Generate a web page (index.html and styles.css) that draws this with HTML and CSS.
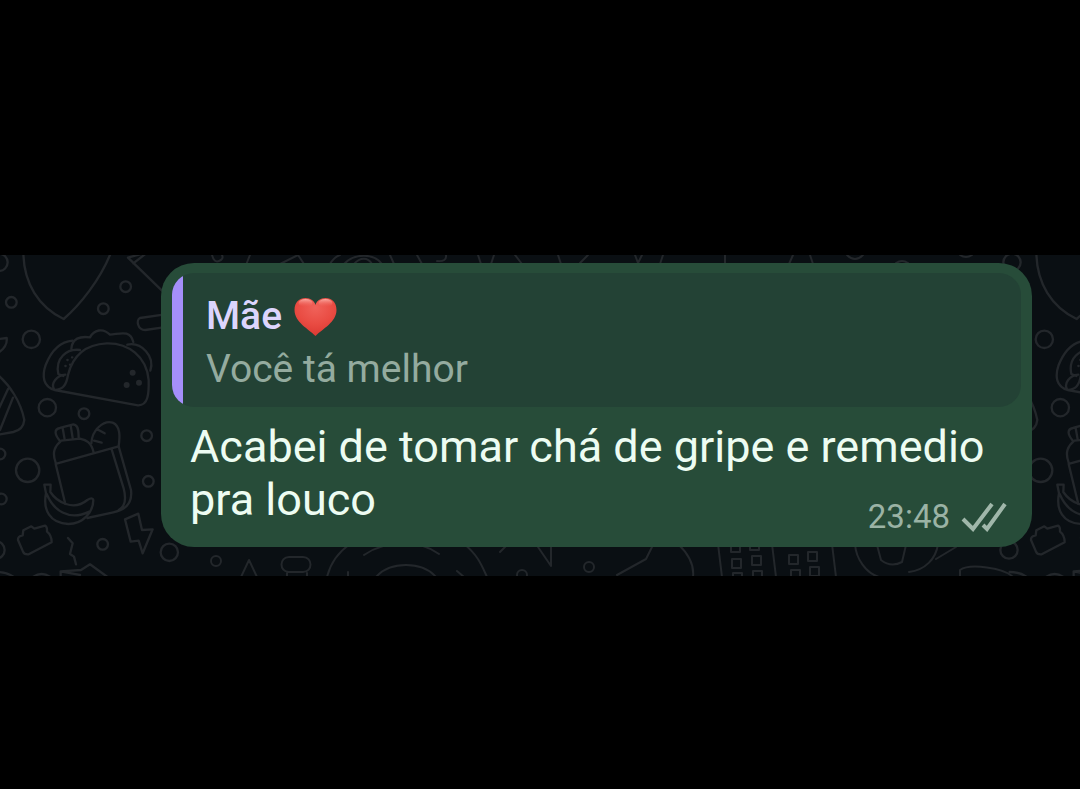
FILE: index.html
```html
<!DOCTYPE html>
<html lang="pt-BR">
<head>
    <meta charset="UTF-8">
    <meta name="viewport" content="width=device-width, initial-scale=1.0">
    <title>Mãe</title>
    <link rel="stylesheet" href="styles.css">
</head>
<body>
    <main class="chat">
        <svg class="wallpaper" aria-hidden="true">
            <defs>
                <g id="doodles">
                    <!-- upper half -->
                    <g transform="translate(0 -5) scale(.3333)">
                        <circle cx="-3" cy="37" r="26"/>
                        <circle cx="34" cy="157" r="16"/>
                        <circle cx="377" cy="110" r="16"/>
                        <circle cx="310" cy="176" r="16"/>
                        <circle cx="94" cy="268" r="26"/>
                        <circle cx="142" cy="473" r="26"/>
                        <circle cx="252" cy="491" r="16"/>
                        <path d="M70 10C72 100 115 170 191 207C240 165 300 90 332 10"/>
                        <path d="M430 10L384 23L486 122M400 40L436 12"/>
                        <path d="M490 194L420 204C408 210 412 240 436 240L490 232"/>
                        <path d="M-10 268L20 264C22 280 14 296 -5 308"/>
                        <path d="M-10 372C30 405 62 455 73 510Q70 540 40 546L0 553M24 417L-10 490M39 443L0 540"/>
                        <!-- taco -->
                        <path d="M164 420L414 466C445 467 447 430 446 390C440 320 385 278 320 280C245 284 215 330 204 375C199 405 190 418 164 420C130 410 125 380 137 345C155 300 180 275 218 272"/>
                        <path d="M214 297C216 265 240 258 270 262C282 240 308 232 330 254C360 252 390 238 400 276M382 284C425 275 465 320 451 362M240 300C200 295 165 325 175 372L190 378M196 374C170 376 152 400 162 418"/>
                        <path d="M202 330h1M216 322h1M196 348h1M210 344h1"/>
                        <g class="dots">
                            <circle cx="398" cy="368" r="9"/>
                            <circle cx="380" cy="405" r="9"/>
                            <circle cx="417" cy="398" r="9"/>
                        </g>
                    </g>
                    <!-- lower half -->
                    <g transform="translate(0 155) scale(.3333)">
                        <circle cx="0" cy="132" r="16"/>
                        <circle cx="4" cy="267" r="16"/>
                        <circle cx="83" cy="181" r="35"/>
                        <circle cx="440" cy="77" r="16"/>
                        <circle cx="445" cy="214" r="16"/>
                        <circle cx="308" cy="403" r="16"/>
                        <circle cx="-12" cy="420" r="26"/>
                        <circle cx="508" cy="427" r="26"/>
                        <!-- bag with bottle and bread -->
                        <path d="M196 282L167 162L356 109L393 240C398 280 375 300 340 307L262 324M167 158C155 125 165 108 184 92L240 86C258 90 274 96 281 128M335 118L371 235C380 270 375 290 356 300"/>
                        <path d="M180 93C165 75 160 58 180 54L220 43C238 45 235 70 236 82M188 54L194 88M212 46L218 84M274 100C276 60 310 30 338 38C362 48 360 80 356 109M290 57L314 70M282 92L305 98"/>
                        <path d="M133 224H152L151 246C170 275 220 305 262 270Q278 260 280 270C280 305 250 342 205 342C150 340 128 300 138 250ZM140 252C160 300 205 335 268 305"/>
                        <path d="M375 328L415 311L426 360L458 358L428 430L416 392L392 395Z"/>
                        <path d="M70 361L94 349L103 356L135 347Q142 350 141 365Q155 375 155 397L86 433Q72 434 69 425L54 390Q53 378 68 376Z"/>
                        <path d="M204 384L218 400L210 432L222 440L228 463M182 510V484L243 480L270 463L335 510M182 484L240 495M-10 486Q20 486 40 500M100 500Q125 484 150 500"/>
                    </g>
                    <!-- strip above the bubble -->
                    <path d="M212 0Q214 8 219 6T222 0M250 0L246 10M280 9L298 0L304 9M330 9Q334 2 340 0M344 9C354-2 374-2 382 9M354 9C360 2 368 2 372 9M390 0L394 9M417 0L422 9M446 0Q447 7 437 6M478 0L481 9M494 0L491 9M515 0L522 9M558 0L561 9M588 0L580 8M635 0L638 8L642 0M663 0L660 9M725 0V9M793 0L789 9M810 0L813 9M847 0Q855 8 863 0M896 8Q902 4 908 8M960 0Q966 4 972 0"/>
                    <!-- strip below the bubble -->
                    <path d="M241 322L249 305L257 322M289 302H303C313 302 313 317 303 317H289C279 317 279 302 289 302ZM287 322V318M307 322V318M327 322C331 306 340 296 350 289M364 300C385 285 420 285 439 299M376 322C390 306 422 306 436 322M464 289C478 300 482 311 487 322M457 316L464 322M348 317V322M500 297L508 289M538 292L551 311V289M617 320L646 304L652 292M678 289Q695 305 693 322M718 289L722 322M772 289L776 322M832 289L836 322M855 289C856 304 866 318 879 322M877 290L881 305Q891 313 902 307L906 290M909 317C925 315 936 304 938 289M936 304L956 292M960 322V315C970 308 1004 313 1013 322"/>
                    <circle cx="216" cy="306" r="5"/>
                    <circle cx="589" cy="312" r="5"/>
                    <circle cx="522" cy="320" r="5"/>
                    <path d="M731 289v8h9v-8M732 304h9v9h-9zM733 318h9v8h-9zM750 289v6h9v-6M752 301h9v9h-9zM753 316h9v9h-9zM789 300h9v9h-9zM791 315h9v9h-9zM808 297h9v9h-9zM810 312h9v9h-9z"/>
                </g>
            </defs>
            <use href="#doodles"/>
            <use href="#doodles" x="1013"/>
        </svg>

        <article class="bubble">
            <blockquote class="quote">
                <div class="quote-name">
                    <span>Mãe</span>
                    <svg class="heart" viewBox="0 0 42 38" role="img" aria-label="coração">
                        <defs>
                            <radialGradient id="heartFill" cx=".5" cy=".25" r=".8">
                                <stop offset="0" stop-color="#f0625a"/>
                                <stop offset=".55" stop-color="#e94b42"/>
                                <stop offset="1" stop-color="#d93630"/>
                            </radialGradient>
                            <linearGradient id="heartShine" x2="0" y2="1">
                                <stop offset="0" stop-color="#ffc0b8" stop-opacity=".8"/>
                                <stop offset="1" stop-color="#f0625a" stop-opacity="0"/>
                            </linearGradient>
                        </defs>
                        <path fill="url(#heartFill)" d="M21 38C14 31 0 24 0 12C0 4 5 0 11 0C16 0 20 3 21 7C22 3 26 0 31 0C37 0 42 4 42 12C42 24 28 31 21 38Z"/>
                        <ellipse fill="url(#heartShine)" cx="11" cy="5" rx="7" ry="4"/>
                        <ellipse fill="url(#heartShine)" cx="31" cy="5" rx="7" ry="4"/>
                    </svg>
                </div>
                <div class="quote-text">Você tá melhor</div>
            </blockquote>
            <p class="message">
                Acabei de tomar chá de gripe e remedio pra louco
                <span class="meta">
                    <time datetime="23:48">23:48</time>
                    <svg class="checks" viewBox="0 0 46 30" role="img" aria-label="entregue">
                        <path d="M2 17L12 27L31 2M22 23L26 27L44 2"/>
                    </svg>
                </span>
            </p>
        </article>
    </main>
</body>
</html>
```

FILE: styles.css
```css
* {
    box-sizing: border-box;
}
body {
    font-family: Roboto, sans-serif;
    margin: 0;
    padding-top: 255px;
    background-color: #000000;
}
.chat {
    position: relative;
    overflow: hidden;
    padding: 8px 48px 29px 161px;
    background-color: #0a0f13;
}
.wallpaper {
    position: absolute;
    top: 0;
    left: 0;
    width: 100%;
    height: 100%;
}
#doodles {
    fill: none;
    stroke: #23272b;
    stroke-width: 2px;
    stroke-linecap: round;
    stroke-linejoin: round;
}
#doodles g {
    stroke-width: 7px;
}
#doodles .dots {
    fill: #23272b;
    stroke: none;
}
.bubble {
    position: relative;
    padding: 10px 11px;
    border-radius: 33px;
    background-color: #274c39;
}
.quote {
    position: relative;
    overflow: hidden;
    margin: 0;
    padding: 17px 24px 11px 34px;
    border-radius: 22px;
    background-color: #234235;
    font-size: 39px;
    line-height: 53px;
}
.quote::before {
    content: "";
    position: absolute;
    top: 0;
    bottom: 0;
    left: 0;
    width: 11px;
    background-color: #a58ffa;
}
.quote-name {
    display: flex;
    align-items: center;
    gap: 12px;
    color: #dcd5fd;
    font-weight: 500;
}
.heart {
    width: 43px;
    height: 38px;
}
.quote-text {
    color: #94ab9f;
}
.message {
    display: flow-root;
    margin: 0;
    padding: 13px 14px 0 18px;
    color: #edfcf2;
    font-size: 45px;
    line-height: 53px;
}
.meta {
    float: right;
    display: flex;
    align-items: center;
    gap: 11px;
    margin-top: 24px;
    color: #9bb3a5;
    font-size: 33px;
    line-height: 40px;
}
.checks {
    width: 46px;
    height: 30px;
    fill: none;
    stroke: #a0b7aa;
    stroke-width: 4px;
}
```
